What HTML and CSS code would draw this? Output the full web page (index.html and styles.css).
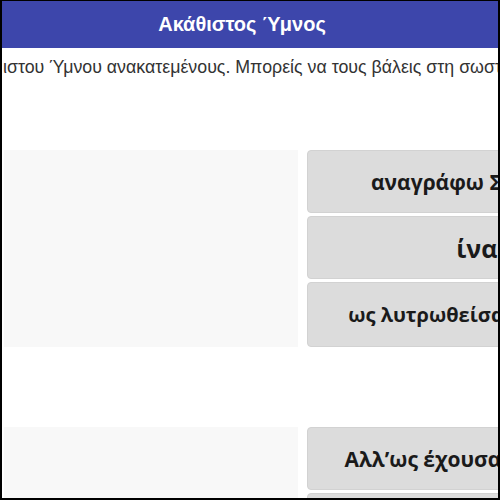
FILE: index.html
```html
<!DOCTYPE html>
<html lang="el">
<head>
  <meta charset="UTF-8" />
  <meta name="viewport" content="width=device-width, initial-scale=1.0" />
  <title>Ακάθιστος Ύμνος</title>
  <link rel="stylesheet" href="styles.css">
</head>
<body>
  <div class="frame">
    <header class="bar">
      <h1>Ακάθιστος Ύμνος</h1>
    </header>
    <p class="intro"><span>ιστου Ύμνου ανακατεμένους. Μπορείς να τους βάλεις στη σωστή σειρά;</span></p>

    <section class="stanza">
      <div class="slot"></div>
      <div class="choices">
        <button class="choice first">αναγράφω Σοι η Πόλις Σου Θεοτόκε</button>
        <button class="choice big">ίνα κράζω Χαίρε</button>
        <button class="choice">ως λυτρωθείσα των δεινών ευχαριστήρια</button>
      </div>
    </section>

    <section class="stanza">
      <div class="slot"></div>
      <div class="choices">
        <button class="choice mid">Αλλ’ως έχουσα το κράτος απροσμάχητον</button>
        <button class="choice">Τη υπερμάχω στρατηγώ τα νικητήρια</button>
      </div>
    </section>
  </div>
</body>
</html>
```

FILE: styles.css
```css
body {
  margin: 0;
  background: #fff;
}
.frame {
  width: 500px;
  height: 500px;
  box-sizing: border-box;
  border: 2px solid #000;
  border-top-width: 1px;
  overflow: hidden;
  font-family: 'Liberation Sans', Arial, sans-serif;
}
.bar {
  background: #3d46ab;
  height: 47px;
  display: flex;
  align-items: center;
  justify-content: center;
  padding-right: 16px;
}
.bar h1 {
  margin: 0;
  color: #fff;
  font-size: 20px;
  font-weight: bold;
}
.intro {
  margin: 0;
  line-height: 38px;
  font-size: 17.8px;
  color: #333;
  white-space: nowrap;
  padding-left: 1px;
}
.stanza {
  display: flex;
  gap: 9px;
  margin-top: 64px;
  padding-left: 2px;
}
.stanza + .stanza {
  margin-top: 80px;
}
.slot {
  width: 294px;
  flex-shrink: 0;
  background: #f8f8f8;
}
.choices {
  width: 506px;
  flex-shrink: 0;
  display: flex;
  flex-direction: column;
  gap: 3px;
}
.choice {
  height: 63px;
  background: #dcdcdc;
  border: 1px solid #d2d2d2;
  border-radius: 4px;
  font-family: 'Open Sans', sans-serif;
  font-weight: bold;
  font-size: 20px;
  color: #1a1a1a;
  white-space: nowrap;
  overflow: hidden;
  padding: 0 8px;
}
.choice:last-child {
  height: 65px;
}
.choice.first {
  font-size: 21px;
}
.choice.big {
  font-size: 25px;
}
.choice.mid {
  font-size: 21px;
}
```
